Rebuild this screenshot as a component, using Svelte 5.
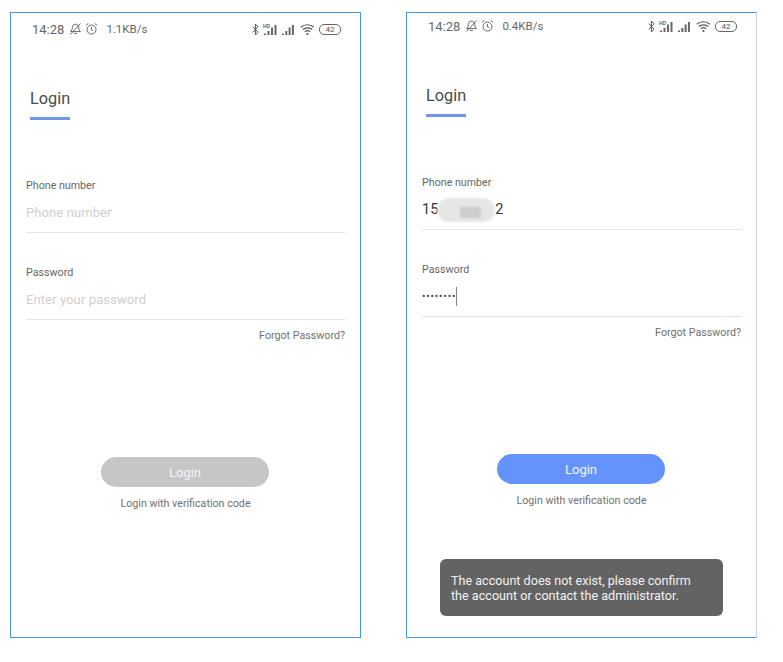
<script>
	const phones = [
		{ speed: '1.1KB/s', filled: false },
		{ speed: '0.4KB/s', filled: true }
	];
</script>

<main class="page">
	{#each phones as p}
		<section class="phone" class:filled={p.filled}>
			<header class="status">
				<span class="time">14:28</span>
				<svg class="ic" width="13" height="14" viewBox="0 0 13 14">
					<path d="M6.500 2.200c2 0 3.200 1.500 3.200 3.400 0 2 .6 3 1.800 4H1.500c1.200-1 1.800-2 1.800-4 0-1.900 1.200-3.400 3.200-3.400zM5.200 11.500h2.600M1.500 12.500L11.500 1.500" fill="none" stroke="#666" stroke-width="1" />
				</svg>
				<svg class="ic" width="13" height="14" viewBox="0 0 13 14">
					<circle cx="6.500" cy="7.600" r="4.500" fill="none" stroke="#666" stroke-width="1" />
					<path d="M6.500 5v2.800l1.800 1M1 3.400l2.300-2M12 3.400l-2.300-2" fill="none" stroke="#666" stroke-width="1" />
				</svg>
				<span class="speed">{p.speed}</span>
				<span class="spacer"></span>
				<svg class="ic bt" width="7" height="13" viewBox="0 0 7 13">
					<path d="M.8 3.600l5.200 5.600L3.400 12V1L6 3.800.8 9.400" fill="none" stroke="#555" stroke-width="1" />
				</svg>
				<svg class="ic sim" width="15" height="13" viewBox="0 0 15 13">
					<path d="M1 12h2v-1.500H1zM4.500 12h2V8h-2zM8 12h2V4.500H8zM11.500 12h2V2h-2z" fill="#666" />
					<text x="0" y="5" font-size="5" font-weight="700" font-family="Liberation Sans, sans-serif" fill="#666">HD</text>
				</svg>
				<svg class="ic sim2" width="14" height="13" viewBox="0 0 14 13">
					<path d="M1 12h2v-1.500H1zM4.300 12h2V8h-2zM7.600 12h2V4.500h-2zM10.900 12h2V2h-2z" fill="#666" />
				</svg>
				<svg class="ic wifi" width="15" height="13" viewBox="0 0 15 13">
					<path d="M.8 4.200c3.800-3.300 9.200-3.300 13 0M2.800 6.500c2.600-2.200 6.800-2.200 9.400 0M4.900 8.700c1.500-1.200 3.700-1.200 5.200 0" fill="none" stroke="#555" stroke-width="1.200" />
					<circle cx="7.500" cy="11" r="1.100" fill="#555" />
				</svg>
				<span class="battery">42</span>
			</header>

			<div class="tab">
				<h1>Login</h1>
			</div>

			<div class="field first">
				<span class="label">Phone number</span>
				<div class="input">
					{#if p.filled}
						<span class="value">15</span>
						<span class="blur"></span>
						<span class="value">2</span>
					{:else}
						<span class="placeholder">Phone number</span>
					{/if}
				</div>
			</div>
			<div class="field">
				<span class="label">Password</span>
				<div class="input">
					{#if p.filled}
						<span class="dots">••••••••</span>
						<span class="caret"></span>
					{:else}
						<span class="placeholder">Enter your password</span>
					{/if}
				</div>
			</div>
			<div class="forgot">Forgot Password?</div>

			<button class="login" type="button">Login</button>
			<div class="alt">Login with verification code</div>

			{#if p.filled}
				<div class="toast">The account does not exist, please confirm<br />the account or contact the administrator.</div>
			{/if}
		</section>
	{/each}
</main>

<style>
	:global(body) {
		margin: 0;
		background: #fff;
	}
	.page {
		display: flex;
		gap: 45px;
		width: 783px;
		height: 662px;
		box-sizing: border-box;
		padding: 12px 0 0 10px;
		font-family: Roboto, "Liberation Sans", sans-serif;
		color: #555;
	}
	.phone {
		position: relative;
		width: 351px;
		height: 626px;
		box-sizing: border-box;
		border: 1px solid #4a95d6;
		background: #fff;
	}
	.phone.filled {
		border-right: 1px solid #d4d4d4;
	}
	.status {
		display: flex;
		align-items: center;
		height: 16px;
		margin-top: 8px;
		padding: 0 19px 0 21px;
		font-size: 13px;
		color: #666;
	}
	.filled .status {
		margin-top: 5px;
	}
	.time {
		margin-right: 5px;
	}
	.ic {
		flex: none;
		margin-right: 3px;
	}
	.speed {
		margin-left: 5px;
		font-size: 11.500px;
	}
	.spacer {
		flex: 1;
	}
	.bt {
		margin-right: 4px;
	}
	.wifi {
		margin-left: 2px;
		margin-right: 4px;
	}
	.battery {
		width: 20px;
		height: 9px;
		border: 1px solid #666;
		border-radius: 5px;
		font-size: 8px;
		line-height: 9px;
		text-align: center;
		color: #555;
	}
	.tab {
		width: 40px;
		margin: 51px 0 0 19px;
		padding-bottom: 7px;
		border-bottom: 3px solid #6f97ee;
	}
	h1 {
		margin: 0;
		font-size: 16.300px;
		font-weight: 400;
		line-height: 22px;
		color: #4a4a4a;
	}
	.field {
		margin: 0 15px;
		padding-top: 33px;
	}
	.field.first {
		padding-top: 59px;
	}
	.label {
		display: block;
		font-size: 10.700px;
		line-height: 14px;
		color: #666;
	}
	.input {
		display: flex;
		align-items: center;
		height: 27px;
		margin-top: 6px;
		padding-bottom: 6px;
		border-bottom: 1px solid #e4e4e4;
		font-size: 13px;
	}
	.placeholder {
		color: #cfcfcf;
		letter-spacing: 0.1px;
	}
	.value {
		color: #333;
		font-size: 14.500px;
	}
	.blur {
		position: relative;
		width: 58px;
		height: 24px;
		margin-left: -1px;
		border-radius: 12px;
		background: #e6e6e6;
		filter: blur(1px);
	}
	.blur::after {
		content: "";
		position: absolute;
		left: 23px;
		top: 9px;
		width: 21px;
		height: 11px;
		background: #cdcdcd;
	}
	.dots {
		color: #444;
		font-size: 10px;
		letter-spacing: 0.900px;
	}
	.caret {
		width: 1px;
		height: 19px;
		background: #888;
	}
	.forgot {
		margin: 9px 15px 0;
		font-size: 10.700px;
		line-height: 14px;
		text-align: right;
		color: #707070;
	}
	.login {
		display: block;
		width: 168px;
		height: 30px;
		margin: 114px 0 0 90px;
		border: none;
		border-radius: 15px;
		background: #c6c6c6;
		color: #f4f4f4;
		font: 400 13px Roboto, "Liberation Sans", sans-serif;
	}
	.filled .login {
		background: #6494fb;
	}
	.alt {
		margin-top: 10px;
		font-size: 10.700px;
		line-height: 14px;
		text-align: center;
		color: #707070;
	}
	.toast {
		position: absolute;
		left: 33px;
		bottom: 21px;
		width: 283px;
		height: 57px;
		box-sizing: border-box;
		padding: 14px 11px 0;
		border-radius: 6px;
		background: #636363;
		color: #f2f2f2;
		font-size: 12.600px;
		line-height: 15px;
	}
</style>
